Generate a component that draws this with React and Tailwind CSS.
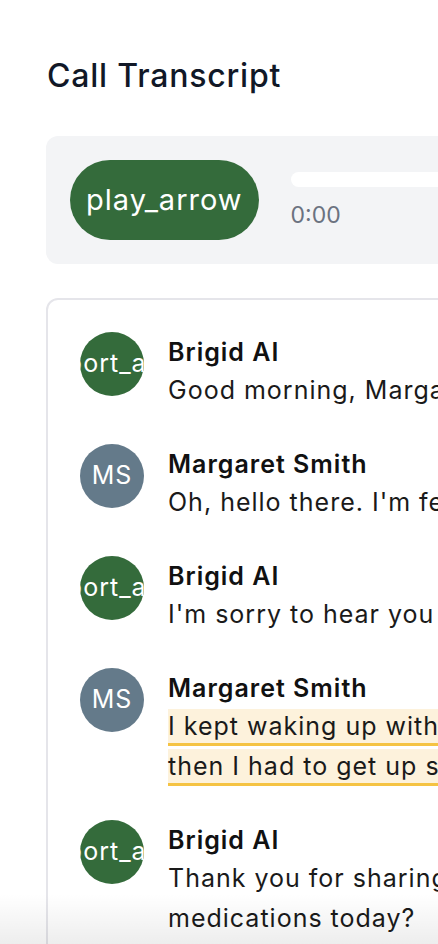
const MESSAGES = [
  {
    speaker: 'ai',
    name: 'Brigid AI',
    lines: ['Good morning, Margaret. This is Brigid calling for your daily check-in. How are you feeling today?'],
  },
  {
    speaker: 'patient',
    name: 'Margaret Smith',
    lines: ["Oh, hello there. I'm feeling a bit tired this morning, to be honest."],
  },
  {
    speaker: 'ai',
    name: 'Brigid AI',
    lines: ["I'm sorry to hear you are tired. Did you have trouble sleeping last night?"],
  },
  {
    speaker: 'patient',
    name: 'Margaret Smith',
    highlight: true,
    lines: [
      'I kept waking up with a pain in my chest, it felt tight and heavy, and',
      'then I had to get up so many times during the night to catch my breath.',
    ],
  },
  {
    speaker: 'ai',
    name: 'Brigid AI',
    lines: [
      "Thank you for sharing that, Margaret. I'll let your care team know. Have you taken your",
      'medications today?',
    ],
  },
  {
    speaker: 'patient',
    name: 'Margaret Smith',
    lines: ['Yes, I took them with my breakfast.'],
  },
]

function Avatar({ speaker }) {
  if (speaker === 'ai') {
    return (
      <div className="w-16 h-16 shrink-0 rounded-full bg-[#346b3b] overflow-hidden flex items-center justify-center text-white text-[25px] tracking-[1px] whitespace-nowrap">
        <span>support_agent</span>
      </div>
    )
  }
  return (
    <div className="w-16 h-16 shrink-0 rounded-full bg-[#647a8a] flex items-center justify-center text-white text-[25px] tracking-[1px]">
      MS
    </div>
  )
}

export default function App() {
  return (
    <div
      className="relative w-full h-[944px] overflow-hidden bg-white"
      style={{ fontFamily: 'Inter, "Noto Sans", sans-serif' }}
    >
      <div className="w-[1200px] px-[46px] pt-[58px]">
        {/* Header */}
        <h1 className="text-[32px] leading-9 font-medium tracking-[0.8px] text-[#111827] pl-px">Call Transcript</h1>

        {/* Audio player */}
        <div className="mt-[42px] bg-[#f3f4f6] rounded-xl p-6 flex items-start gap-[32px]">
          <button className="h-20 px-4 rounded-full bg-[#346b3b] text-white text-[29px] tracking-[1px] flex items-center">
            play_arrow
          </button>
          <div className="flex-1 pt-3">
            <div className="h-[15px] rounded-full bg-white" />
            <div className="mt-3 text-[23px] leading-8 text-[#6b7280]">0:00</div>
          </div>
        </div>

        {/* Transcript */}
        <div className="mt-[34px] border-2 border-[#e5e5ea] rounded-xl p-8 flex flex-col gap-[34px]">
          {MESSAGES.map((m, i) => (
            <div key={i} className="flex items-start gap-6">
              <Avatar speaker={m.speaker} />
              <div className="pt-0.5 whitespace-nowrap">
                <div className="text-[25px] leading-9 font-semibold tracking-[1px] text-[#111111]">{m.name}</div>
                <div className="text-[25px] leading-10 tracking-[1px] text-[#1a1a1a]">
                  {m.highlight ? (
                    <span className="bg-[#fdf2dc] border-b-[3px] border-[#f5c343] py-0.5">
                      {m.lines[0]}
                      <br />
                      {m.lines[1]}
                    </span>
                  ) : (
                    m.lines.map((l, j) => <div key={j}>{l}</div>)
                  )}
                </div>
              </div>
            </div>
          ))}
        </div>
      </div>

      {/* bottom fade */}
      <div className="pointer-events-none absolute inset-x-0 bottom-0 h-[50px] bg-gradient-to-b from-white/0 to-black/[0.07]" />
    </div>
  )
}
